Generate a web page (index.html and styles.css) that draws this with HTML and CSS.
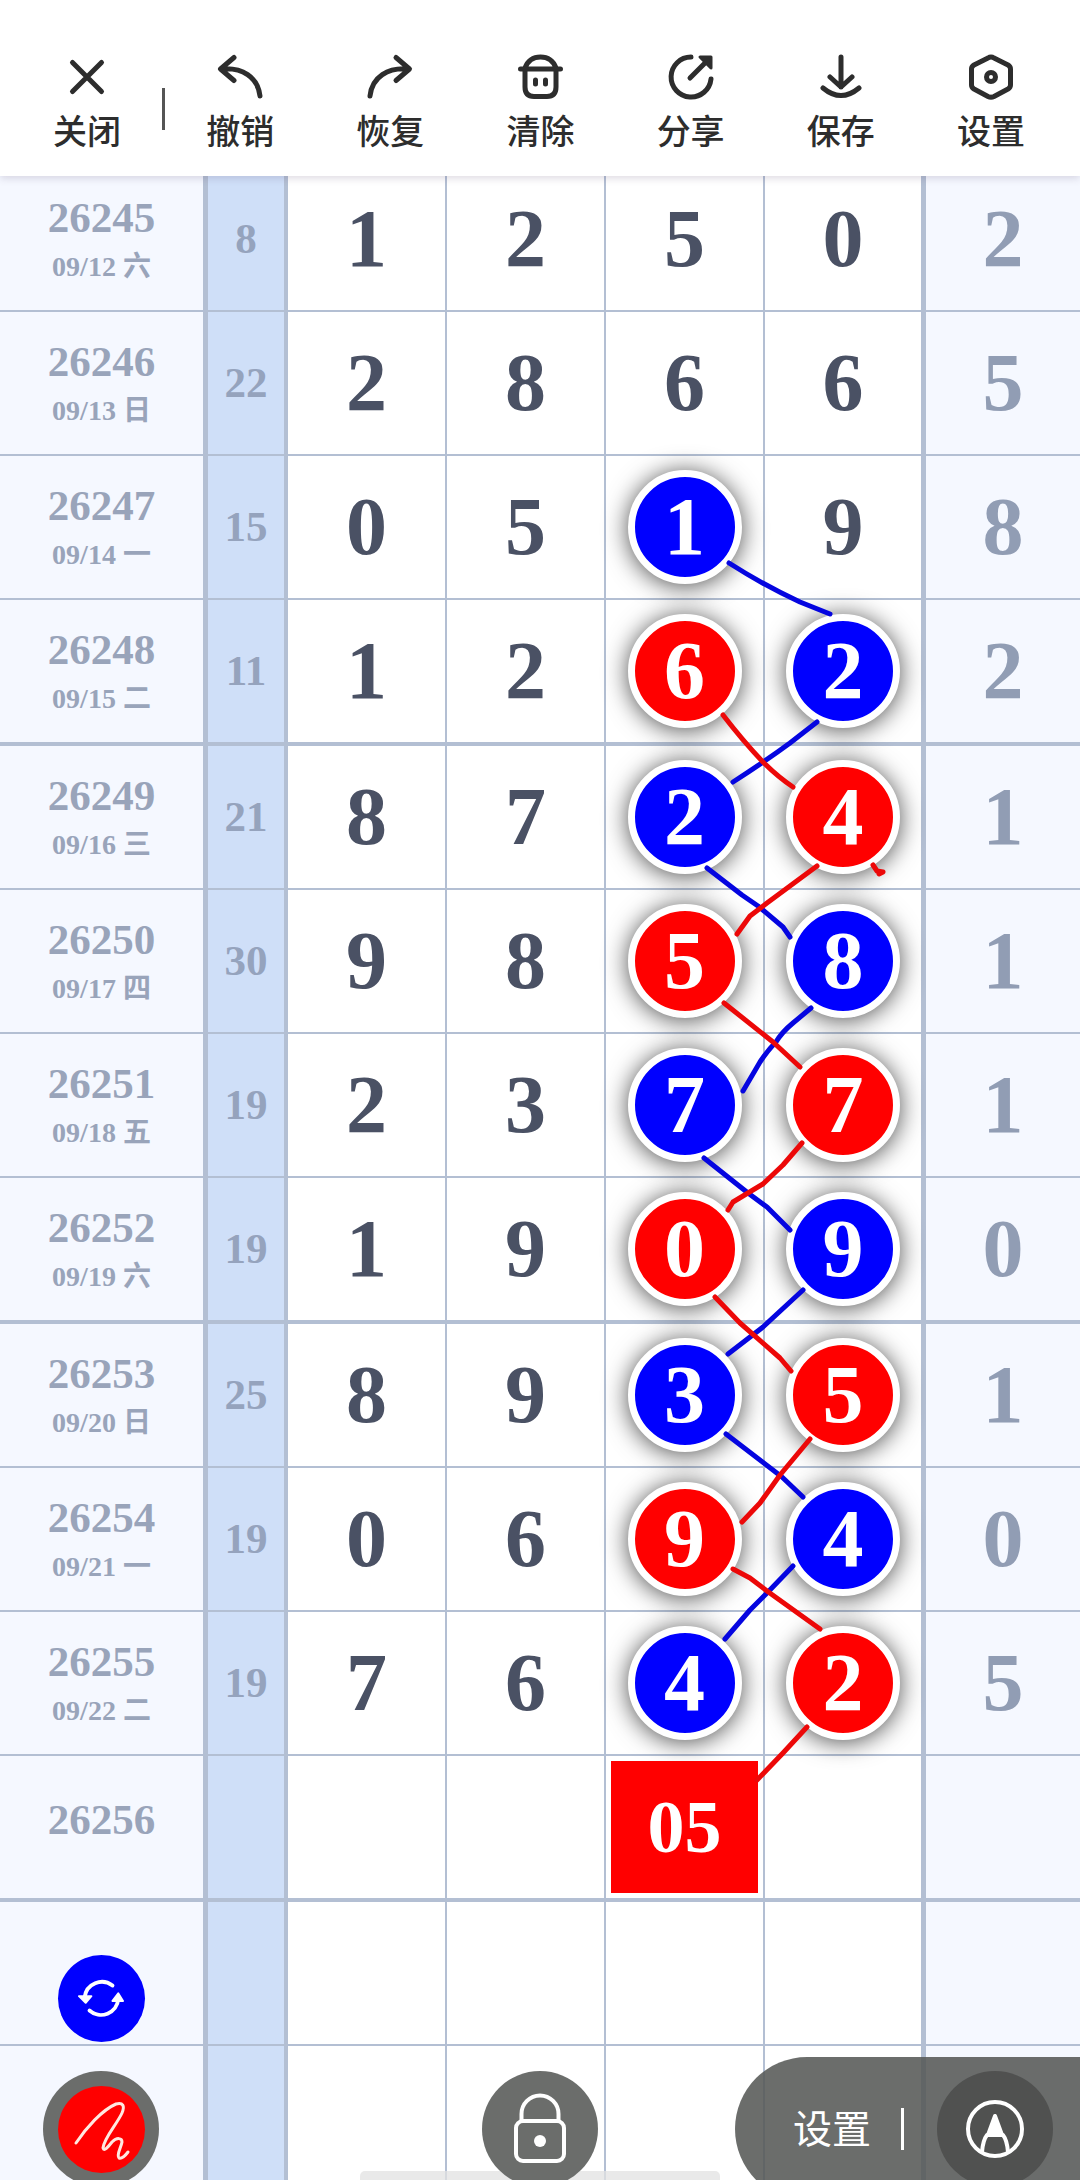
FILE: index.html
```
<!DOCTYPE html>
<html lang="zh-CN">
<head>
  <meta charset="UTF-8" />
  <meta name="viewport" content="width=device-width, initial-scale=1" />
  <title>走势图</title>
  <link rel="stylesheet" href="styles.css">
</head>
<body>

  <header class="toolbar">
    <button class="tool close">
      <svg viewBox="0 0 48 48"><path d="M9.500 9.500 L38.500 38.500 M38.500 9.500 L9.500 38.500"/></svg>
      <span>关闭</span>
    </button>
    <div class="divider"></div>
    <button class="tool">
      <svg viewBox="0 0 48 48"><path d="M18 4.500 L4.500 16 L18 27.500 M5 16 C26 14 42 24 44 43"/></svg>
      <span>撤销</span>
    </button>
    <button class="tool">
      <svg viewBox="0 0 48 48"><path d="M30 4.500 L43.500 16 L30 27.500 M43 16 C22 14 6 24 4 43"/></svg>
      <span>恢复</span>
    </button>
    <button class="tool">
      <svg viewBox="0 0 48 48"><path d="M4.500 16 H44.500 M9 15 C12 7 18 4 24.500 4 C31 4 37 7 40 15 M9 17 V34 Q9 43.500 18 43.500 H31 Q40 43.500 40 34 V17 M19.500 27 V31 M29.500 27 V31"/></svg>
      <span>清除</span>
    </button>
    <button class="tool">
      <svg viewBox="0 0 48 48"><path d="M24 4 A20 20 0 1 0 44 26 M23 25 L41 7"/><path class="solid" d="M33 4 H44 V15 Z"/></svg>
      <span>分享</span>
    </button>
    <button class="tool">
      <svg viewBox="0 0 48 48"><path d="M24 4 V34 M13 24 L24 34 L35 24 M6 35 Q24 50 42 35"/></svg>
      <span>保存</span>
    </button>
    <button class="tool">
      <svg viewBox="0 0 48 48"><path d="M21 5 Q24 3 27 5 L41 12 Q43.500 13.500 43.500 16 V32 Q43.500 34.500 41 36 L27 43.500 Q24 45 21 43.500 L7 36 Q4.500 34.500 4.500 32 V16 Q4.500 13.500 7 12 Z"/><circle cx="24" cy="24" r="4.500"/></svg>
      <span>设置</span>
    </button>
  </header>

  <main class="chart">
    <div class="board">
      <table class="trend">
        <colgroup>
          <col class="col-issue"><col class="col-sum"><col><col><col><col class="col-ones"><col class="col-last">
        </colgroup>
        <tbody>
          <tr><th><b>26245</b><small>09/12 六</small></th><td>8</td><td>1</td><td>2</td><td>5</td><td>0</td><td>2</td></tr>
          <tr><th><b>26246</b><small>09/13 日</small></th><td>22</td><td>2</td><td>8</td><td>6</td><td>6</td><td>5</td></tr>
          <tr><th><b>26247</b><small>09/14 一</small></th><td>15</td><td>0</td><td>5</td><td><span class="ball blue">1</span></td><td>9</td><td>8</td></tr>
          <tr class="group-end"><th><b>26248</b><small>09/15 二</small></th><td>11</td><td>1</td><td>2</td><td><span class="ball red">6</span></td><td><span class="ball blue">2</span></td><td>2</td></tr>
          <tr><th><b>26249</b><small>09/16 三</small></th><td>21</td><td>8</td><td>7</td><td><span class="ball blue">2</span></td><td><span class="ball red">4</span></td><td>1</td></tr>
          <tr><th><b>26250</b><small>09/17 四</small></th><td>30</td><td>9</td><td>8</td><td><span class="ball red">5</span></td><td><span class="ball blue">8</span></td><td>1</td></tr>
          <tr><th><b>26251</b><small>09/18 五</small></th><td>19</td><td>2</td><td>3</td><td><span class="ball blue">7</span></td><td><span class="ball red">7</span></td><td>1</td></tr>
          <tr class="group-end"><th><b>26252</b><small>09/19 六</small></th><td>19</td><td>1</td><td>9</td><td><span class="ball red">0</span></td><td><span class="ball blue">9</span></td><td>0</td></tr>
          <tr><th><b>26253</b><small>09/20 日</small></th><td>25</td><td>8</td><td>9</td><td><span class="ball blue">3</span></td><td><span class="ball red">5</span></td><td>1</td></tr>
          <tr><th><b>26254</b><small>09/21 一</small></th><td>19</td><td>0</td><td>6</td><td><span class="ball red">9</span></td><td><span class="ball blue">4</span></td><td>0</td></tr>
          <tr><th><b>26255</b><small>09/22 二</small></th><td>19</td><td>7</td><td>6</td><td><span class="ball blue">4</span></td><td><span class="ball red">2</span></td><td>5</td></tr>
          <tr class="group-end next"><th><b>26256</b></th><td></td><td></td><td></td><td><span class="pick">05</span></td><td></td><td></td></tr>
          <tr><th></th><td></td><td></td><td></td><td></td><td></td><td></td></tr>
          <tr><th></th><td></td><td></td><td></td><td></td><td></td><td></td></tr>
        </tbody>
      </table>

      <!-- hand drawn links between the balls, y starts at the top of the first row -->
      <svg class="links" viewBox="0 0 1080 2022" preserveAspectRatio="none">
        <g class="blue-line">
          <path d="M729 395 Q765 418 800 434 L830 446"/>
          <path d="M817 554 L790 575 Q767 592 733 614"/>
          <path d="M707 700 L742 727 L758 738 L783 759 L790 769"/>
          <path d="M811 840 L793 855 Q782 864 776 874 Q768 882 760 894 L743 923"/>
          <path d="M704 990 L748 1025 L767 1039 L790 1062"/>
          <path d="M803 1122 L763 1159 L728 1186"/>
          <path d="M726 1266 L782 1309 L803 1329"/>
          <path d="M793 1398 L767 1425 L750 1442 L725 1471"/>
        </g>
        <g class="red-line">
          <path d="M723 547 Q743 573 763 594 Q778 609 793 619"/>
          <path d="M873 697 L877 703 L883 704 L879 706"/>
          <path d="M817 698 L767 735 L750 748 L737 766"/>
          <path d="M724 835 L773 874 L800 899"/>
          <path d="M802 975 L783 997 L763 1016 L733 1034 L728 1042"/>
          <path d="M715 1129 L740 1155 L780 1190 L791 1203"/>
          <path d="M810 1271 L780 1307 L760 1335 L742 1354"/>
          <path d="M733 1401 L750 1410 L767 1423 L820 1461"/>
          <path d="M807 1559 L783 1585 L757 1612"/>
        </g>
      </svg>
    </div>
  </main>

  <div class="home-bar"></div>

  <nav class="dock">
    <div class="pen-box">
      <button class="swap" aria-label="切换颜色">
        <svg viewBox="0 0 48 48"><path d="M36 10 A18 18 0 0 0 7 22 M12 36 A18 18 0 0 0 42 24"/><path class="solid" d="M1 21 H14 L8 28 Z M36 26 H47 L42 18 Z"/></svg>
      </button>
      <button class="round pen" aria-label="画笔">
        <svg viewBox="0 0 87 87"><path d="M18 57 C28 42 44 24 58 18 C65 16 67 20 64 27 C59 38 46 52 45 62 C46 66 50 61 54 56 C59 51 64 52 64 56 C63 62 58 69 61 72 C64 73 67 70 70 66"/></svg>
      </button>
    </div>
    <button class="round lock" aria-label="锁定">
      <svg viewBox="0 0 60 80"><path d="M11.500 32 V25 A18.500 18.500 0 0 1 48.500 25 V32"/><rect x="6" y="32" width="48" height="40" rx="7"/><circle cx="30" cy="52" r="6"/></svg>
    </button>
    <div class="panel">
      <button class="panel-set">设置</button>
      <div class="divider"></div>
      <button class="round nib" aria-label="绘图">
        <svg viewBox="0 0 60 60"><circle cx="30" cy="30" r="27"/><path d="M17 53 Q18 41 22 36 H38 Q42 41 43 53"/><path class="solid" d="M30 17 L37 36 H23 Z"/></svg>
      </button>
    </div>
  </nav>

</body>
</html>
```
FILE: styles.css
```
* { box-sizing: border-box; }
body {
  margin: 0;
  height: 100vh;
  display: flex;
  flex-direction: column;
  overflow: hidden;
  position: relative;
  background-color: #fff;
  font-family: "Liberation Serif", "Noto Sans CJK SC", serif;
}

button {
  margin: 0;
  padding: 0;
  border: none;
  background: transparent;
  cursor: pointer;
}

svg {
  display: block;
  fill: none;
  stroke: currentColor;
  stroke-linecap: round;
  stroke-linejoin: round;
}

.solid {
  fill: currentColor;
}

.toolbar {
  height: 176px;
  padding: 53px 14px 0 12px;
  display: flex;
  position: relative;
  z-index: 2;
  background-color: #fff;
  color: #2d2d2d;
  box-shadow: 0 2px 8px rgba(80, 60, 100, 0.2);
}

.tool {
  flex: 1;
  display: flex;
  flex-direction: column;
  align-items: center;
  align-self: flex-start;
  gap: 5px;
  color: inherit;
  font-family: "Noto Sans CJK SC", sans-serif;
  font-size: 34px;
  font-weight: 500;
  line-height: 48px;
}

.tool svg {
  width: 48px;
  height: 48px;
  stroke-width: 5;
}

.tool .solid {
  stroke-width: 3;
}

.divider {
  width: 3px;
  height: 42px;
  background-color: currentColor;
}

.toolbar .divider {
  margin-top: 35px;
  background-color: #555;
}

.chart {
  flex: 1;
  min-height: 0;
}

.board {
  position: relative;
  margin-top: -8px;
}

.trend {
  width: 100%;
  table-layout: fixed;
  border-collapse: separate;
  border-spacing: 0;
}

.col-issue { width: 208px; }
.col-sum { width: 80px; }
.col-ones { width: 161px; }
.col-last { width: 154px; }

.trend th,
.trend td {
  height: 144px;
  padding: 0;
  border-bottom: 2px solid #b3bfd3;
  border-right: 2px solid #b3bfd3;
  text-align: center;
  vertical-align: middle;
  color: #4a5164;
  font-size: 82px;
  font-weight: bold;
  line-height: 100px;
}

.trend .group-end th,
.trend .group-end td {
  height: 146px;
  border-bottom-width: 4px;
}

.trend th {
  padding-top: 8px;
  border-right-width: 5px;
  background-color: #f5f8ff;
  color: #99a4ba;
}

.trend th b {
  display: block;
  font-size: 43px;
  line-height: 48px;
}

.trend th small {
  display: block;
  font-size: 28px;
  line-height: 50px;
}

.trend .next th {
  padding-bottom: 22px;
}

.trend td:nth-child(2) {
  border-right-width: 4px;
  background-color: #cfdff8;
  color: #95a3bd;
  font-size: 43px;
}

.trend td:nth-child(6) {
  border-right-width: 5px;
}

.trend td:last-child {
  border-right: none;
  background-color: #f5f8ff;
  color: #919db4;
}

.ball {
  display: block;
  width: 114px;
  height: 114px;
  margin: 0 auto;
  border: 7px solid #fff;
  border-radius: 50%;
  color: #fff;
  box-shadow: 0 2px 24px rgba(0, 0, 0, 0.7);
}

.blue { background-color: #00f; }
.red { background-color: #f00; }

.pick {
  display: block;
  height: 132px;
  margin: 0 5px;
  background-color: #f00;
  color: #fff;
  font-size: 74px;
  line-height: 132px;
}

.links {
  position: absolute;
  top: 0;
  left: 0;
  width: 100%;
  height: 100%;
  stroke-width: 5;
  pointer-events: none;
}

.blue-line { stroke: #0505e0; }
.red-line { stroke: #ec0808; }

/* floating controls over the bottom of the chart */
.home-bar {
  position: absolute;
  left: 50%;
  bottom: 0;
  width: 360px;
  height: 9px;
  margin-left: -180px;
  border-radius: 5px 5px 0 0;
  background-color: rgba(225, 225, 225, 0.75);
}

.dock {
  position: absolute;
  left: 0;
  right: 0;
  bottom: -21px;
  display: grid;
  grid-template-columns: 1fr auto 1fr;
  align-items: end;
  color: #fff;
}

.pen-box {
  width: 116px;
  margin: 0 0 14px 43px;
  display: flex;
  flex-direction: column;
  align-items: center;
  gap: 29px;
}

.round {
  width: 116px;
  height: 116px;
  display: flex;
  align-items: center;
  justify-content: center;
  border-radius: 50%;
  background-color: #6b6d6b;
  color: #fff;
}

.swap {
  width: 87px;
  height: 87px;
  display: flex;
  align-items: center;
  justify-content: center;
  border-radius: 50%;
  background-color: #00f;
  color: #fff;
}

.swap svg {
  width: 46px;
  height: 46px;
  stroke-width: 4;
}

.swap .solid {
  stroke-width: 2;
}

.pen svg {
  width: 87px;
  height: 87px;
  border-radius: 50%;
  background-color: #f00;
  color: #ffe8e0;
  stroke-width: 3;
}

.lock {
  margin-bottom: 14px;
}

.lock svg {
  width: 60px;
  height: 80px;
  stroke-width: 4;
}

.lock circle {
  fill: currentColor;
  stroke: none;
}

.panel {
  width: 345px;
  height: 144px;
  padding-right: 27px;
  justify-self: end;
  display: flex;
  align-items: center;
  justify-content: flex-end;
  border-radius: 72px 0 0 72px;
  background-color: rgba(85, 87, 85, 0.87);
}

.panel-set {
  padding-bottom: 6px;
  color: #fff;
  font-family: "Noto Sans CJK SC", sans-serif;
  font-size: 39px;
}

.panel .divider {
  margin: 0 33px 0 30px;
}

.nib {
  background-color: #505150;
}

.nib svg {
  width: 60px;
  height: 60px;
  stroke-width: 4;
}
```
